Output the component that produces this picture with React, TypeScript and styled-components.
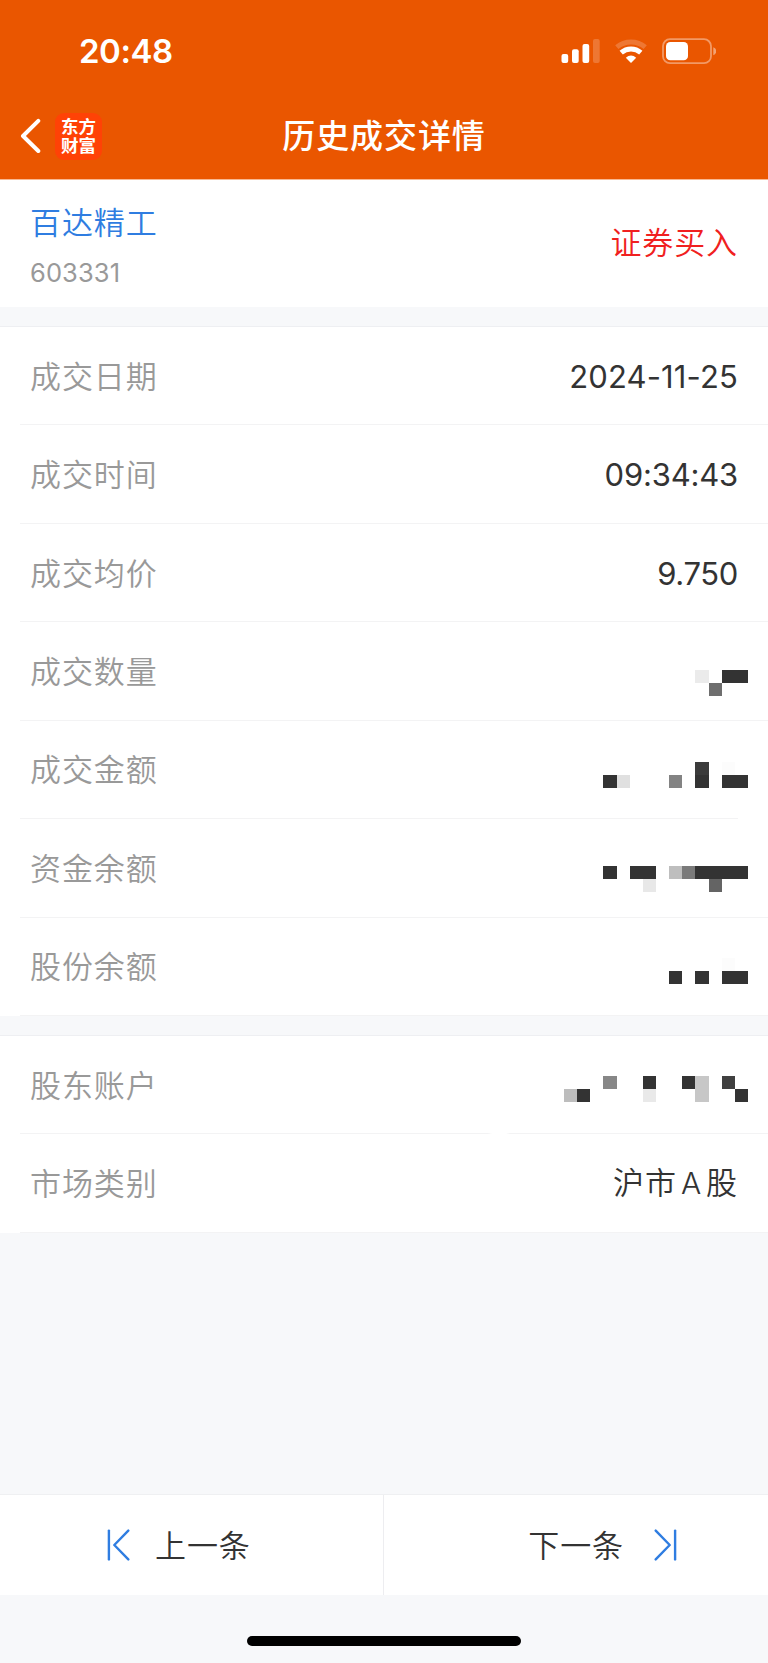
import React from 'react';
import styled, { createGlobalStyle } from 'styled-components';

const GlobalStyle = createGlobalStyle`
  * { box-sizing: border-box; }
  body {
    margin: 0;
    background: #f7f8fa;
    font-family: Inter, 'Noto Sans CJK SC', sans-serif;
  }
`;

const Screen = styled.div`
  width: 768px;
  height: 1663px;
  display: flex;
  flex-direction: column;
  background: #f7f8fa;
  overflow: hidden;
`;

const Header = styled.header`
  flex: none;
  height: 180px;
  background: #ea5600;
  border-bottom: 1px solid #f8b893;
  color: #fff;
`;

const StatusBar = styled.div`
  height: 93px;
  padding: 10px 52px 0 79px;
  display: flex;
  align-items: center;
  justify-content: space-between;
`;

const Clock = styled.span`
  font-size: 33px;
  font-weight: 560;
  letter-spacing: -0.45px;
  line-height: 40px;
  margin-top: -1px;
`;

const StatusIcons = styled.svg`
  width: 156px;
  height: 28px;
  display: block;
  margin-top: -1px;
`;

const NavBar = styled.div`
  height: 86px;
  display: grid;
  grid-template-columns: 1fr auto 1fr;
  align-items: center;
`;

const NavLeft = styled.div`
  display: flex;
  align-items: center;
  gap: 13px;
  padding-left: 19px;
`;

const BackIcon = styled.svg`
  width: 23px;
  height: 36px;
`;

const Logo = styled.div`
  width: 47px;
  height: 47px;
  border-radius: 9px;
  background: #ff4206;
  display: flex;
  flex-direction: column;
  align-items: center;
  justify-content: center;
  padding-bottom: 2px;
  font: 700 17.5px/19.5px 'Noto Sans CJK SC', sans-serif;
  white-space: nowrap;
`;

const Title = styled.h1`
  margin: 0 0 4px;
  font-family: 'Noto Sans CJK SC', sans-serif;
  font-size: 33px;
  font-weight: 500;
  line-height: 48px;
  letter-spacing: 0.9px;
`;

const Summary = styled.section`
  flex: none;
  height: 127px;
  padding: 0 30px;
  background: #fff;
  display: flex;
  align-items: center;
  justify-content: space-between;
`;

const Stock = styled.div`
  display: flex;
  flex-direction: column;
  gap: 9px;
  margin-top: 3px;
`;

const Cjk = styled.span<{ $color: string; $lift?: number }>`
  font-family: 'Noto Sans CJK SC', sans-serif;
  font-size: 31px;
  font-weight: 350;
  line-height: 46px;
  letter-spacing: 0.9px;
  margin-bottom: ${(p) => p.$lift ?? 0}px;
  color: ${(p) => p.$color};
`;

const Latin = styled.span`
  font-family: Inter, sans-serif;
  margin: 0 5px 0 4px;
  letter-spacing: 0;
  font-size: 30px;
`;

const Code = styled.span`
  font-size: 25.5px;
  line-height: 40px;
  letter-spacing: 0.1px;
  color: #999;
`;

const Group = styled.section`
  flex: none;
  margin-top: 20px;
  background: #fff;
  box-shadow: 0 -1px 0 #eeeff2;
`;

const Row = styled.div<{ $line: string }>`
  height: 98.43px;
  padding: 0 30px 0 10px;
  margin-left: 20px;
  display: flex;
  align-items: center;
  justify-content: space-between;
  background: ${(p) => p.$line} bottom / 100% 1px no-repeat;
`;

const Value = styled.span<{ $spacing: string }>`
  font-size: 31px;
  line-height: 46px;
  margin-top: 1px;
  letter-spacing: ${(p) => p.$spacing};
  color: #333;
`;

const MaskSvg = styled.svg<{ $top: number }>`
  align-self: flex-start;
  flex: none;
  width: 184px;
  height: 26.3px;
  margin: ${(p) => p.$top}px -10.3px 0 0;
`;

const Spacer = styled.div`
  flex: 1;
`;

const Pager = styled.nav`
  flex: none;
  height: 100px;
  display: grid;
  grid-template-columns: 384px 1fr;
  background: #fff;
  box-shadow: 0 -1px 0 #eff0f2;
`;

const PagerButton = styled.button<{ $next?: boolean }>`
  border: 0;
  border-right: ${(p) => (p.$next ? '0' : '1px solid #ededf0')};
  background: none;
  padding: ${(p) => (p.$next ? '0 91px 0 0' : '0 0 0 107px')};
  display: flex;
  align-items: center;
  justify-content: ${(p) => (p.$next ? 'flex-end' : 'flex-start')};
  gap: ${(p) => (p.$next ? '30px' : '25px')};
`;

const StepIcon = styled.svg<{ $flip?: boolean }>`
  width: 23px;
  height: 32px;
  transform: ${(p) => (p.$flip ? 'scaleX(-1)' : 'none')};
`;

const HomeArea = styled.div`
  flex: none;
  height: 68px;
  padding-top: 41px;
  display: flex;
  justify-content: center;
`;

const HomeBar = styled.div`
  width: 274px;
  height: 10px;
  border-radius: 5px;
  background: #000;
`;

const LINE = '#f3f3f4';
const fullLine = `linear-gradient(${LINE}, ${LINE})`;
const shortLine = `linear-gradient(90deg, ${LINE} 718px, transparent 718px)`;
const brokenLine = `linear-gradient(90deg, ${LINE} 468px, transparent 472px, transparent 486px, ${LINE} 490px)`;

type Block = [col: number, row: number, cols: number, rows: number, color: string];

const CELL = 13.14;

const Mask = ({ top, blocks }: { top: number; blocks: Block[] }) => (
  <MaskSvg $top={top} viewBox="0 0 184 26.3" shapeRendering="crispEdges">
    {blocks.map(([c, r, w, h, color]) => (
      <rect key={`${c}-${r}`} x={c * CELL} y={r * CELL} width={w * CELL} height={h * CELL} fill={color} />
    ))}
  </MaskSvg>
);

type Item = {
  label: string;
  value?: string;
  spacing?: string;
  text?: React.ReactNode;
  line?: string;
  top?: number;
  blocks?: Block[];
};

const trade: Item[] = [
  { label: '成交日期', value: '2024-11-25', spacing: '0.15px' },
  { label: '成交时间', value: '09:34:43', spacing: '-0.2px' },
  { label: '成交均价', value: '9.750', spacing: '-0.35px' },
  {
    label: '成交数量',
    top: 47.4,
    blocks: [[10, 0, 1, 1, '#ebebeb'], [12, 0, 2, 1, '#333'], [11, 1, 1, 1, '#6e6e6e']],
  },
  {
    label: '成交金额',
    line: shortLine,
    top: 41,
    blocks: [
      [3, 1, 1, 1, '#333'], [4, 1, 1, 1, '#e0e0e0'], [8, 1, 1, 1, '#838383'],
      [10, 0, 1, 1, '#3b3b3b'], [10, 1, 1, 1, '#333'], [12, 0, 1, 1, '#fcfcfc'], [12, 1, 2, 1, '#333'],
    ],
  },
  {
    label: '资金余额',
    top: 47.3,
    blocks: [
      [3, 0, 1, 1, '#333'], [5, 0, 2, 1, '#333'], [6, 1, 1, 1, '#e8e8e8'], [8, 0, 1, 1, '#bebebe'],
      [9, 0, 1, 1, '#7a7a7a'], [10, 0, 4, 1, '#333'], [11, 1, 1, 1, '#646464'],
    ],
  },
  {
    label: '股份余额',
    top: 40.8,
    blocks: [
      [8, 1, 1, 1, '#333'], [10, 1, 1, 1, '#333'], [12, 0, 1, 1, '#fcfcfc'], [12, 1, 2, 1, '#333'],
    ],
  },
];

const account: Item[] = [
  {
    label: '股东账户',
    line: brokenLine,
    top: 40,
    blocks: [
      [0, 1, 1, 1, '#bdbdbd'], [1, 1, 1, 1, '#333'], [3, 0, 1, 1, '#878787'], [6, 0, 1, 1, '#333'],
      [6, 1, 1, 1, '#e9e9e9'], [9, 0, 1, 1, '#333'], [10, 0, 1, 2, '#c7c7c7'],
      [12, 0, 1, 1, '#404040'], [13, 1, 1, 1, '#333'],
    ],
  },
  { label: '市场类别', text: <>沪市<Latin>A</Latin>股</> },
];

const renderItem = ({ label, value, spacing, text, line, top, blocks }: Item) => (
  <Row key={label} $line={line ?? fullLine}>
    <Cjk $color="#999" $lift={3}>{label}</Cjk>
    {blocks && <Mask top={top ?? 0} blocks={blocks} />}
    {value && <Value $spacing={spacing ?? '0'}>{value}</Value>}
    {text && <Cjk $color="#333" $lift={3}>{text}</Cjk>}
  </Row>
);

const Step = ({ flip }: { flip?: boolean }) => (
  <StepIcon $flip={flip} viewBox="0 0 23 32" fill="none" stroke="#2f7de1" strokeWidth="2.4" strokeLinecap="round" strokeLinejoin="round">
    <path d="M1.9 1.6v28.8" />
    <path d="M21.3 1.6 7.3 16l14 14.4" />
  </StepIcon>
);

export default function App() {
  return (
    <Screen>
      <GlobalStyle />
      <Header>
        <StatusBar>
          <Clock>20:48</Clock>
          <StatusIcons viewBox="0 0 156 28" fill="#fff">
            <rect x="1.5" y="17" width="6.7" height="9" rx="2" />
            <rect x="12" y="12.3" width="6.7" height="13.7" rx="2" />
            <rect x="22.5" y="7" width="6.7" height="19" rx="2" />
            <rect x="33" y="2" width="6.7" height="24" rx="2" opacity=".2" />
            <path d="M56.8 10.1a22 22 0 0 1 28.4 0" fill="none" stroke="#fff" strokeWidth="5" opacity=".2" />
            <path d="M61.2 15.6a15 15 0 0 1 19.6 0" fill="none" stroke="#fff" strokeWidth="5" />
            <path d="M65.8 20.8q5.2-4.4 10.4 0L71 26z" />
            <rect x="103" y="2.2" width="48" height="24" rx="7" fill="none" stroke="#fff" strokeWidth="1.8" opacity=".4" />
            <rect x="106" y="5" width="22" height="18.2" rx="4.3" />
            <path d="M153.3 10.2q3 1.2 3 4t-3 4z" opacity=".45" />
          </StatusIcons>
        </StatusBar>
        <NavBar>
          <NavLeft>
            <BackIcon viewBox="0 0 23 36" fill="none" stroke="#fff" strokeWidth="4" strokeLinecap="round" strokeLinejoin="round">
              <path d="M19.3 2.8 4 18l15.3 15" />
            </BackIcon>
            <Logo>
              <span>东方</span>
              <span>财富</span>
            </Logo>
          </NavLeft>
          <Title>历史成交详情</Title>
        </NavBar>
      </Header>
      <Summary>
        <Stock>
          <Cjk $color="#2f7de1">百达精工</Cjk>
          <Code>603331</Code>
        </Stock>
        <Cjk $color="#f02020" $lift={6}>证券买入</Cjk>
      </Summary>
      <Group>{trade.map(renderItem)}</Group>
      <Group>{account.map(renderItem)}</Group>
      <Spacer />
      <Pager>
        <PagerButton>
          <Step />
          <Cjk $color="#333" $lift={3}>上一条</Cjk>
        </PagerButton>
        <PagerButton $next>
          <Cjk $color="#333" $lift={3}>下一条</Cjk>
          <Step flip />
        </PagerButton>
      </Pager>
      <HomeArea>
        <HomeBar />
      </HomeArea>
    </Screen>
  );
}
